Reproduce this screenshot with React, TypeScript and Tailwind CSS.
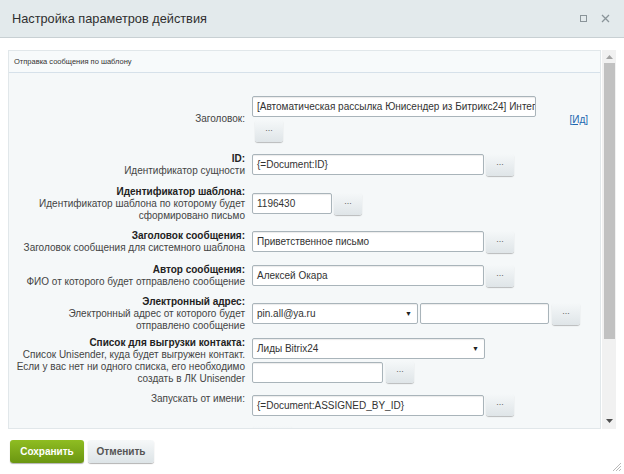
import React from 'react'

const inputCls =
  'h-[21px] rounded-[2px] border border-[#a9b4ba] bg-white px-[4px] text-[10px] leading-[19px] text-[#333] shadow-[inset_0_1px_1px_rgba(0,0,0,0.08)] outline-none'

function DotsButton({ className = '' }: { className?: string }) {
  return (
    <button
      className={
        'flex h-[22px] w-[28px] items-start justify-center rounded-[3px] bg-gradient-to-b from-[#f5f8f9] to-[#dfe5e8] pt-[4px] text-[9px] leading-[9px] text-[#666] shadow-[0_1px_1px_rgba(0,0,0,0.25)] ' +
        className
      }
    >
      ...
    </button>
  )
}

function Select({ value, width }: { value: string; width: string }) {
  return (
    <div className={inputCls + ' flex items-center justify-between pr-[5px] ' + width}>
      <span>{value}</span>
      <span className="text-[7px] text-[#222]">▼</span>
    </div>
  )
}

function Label({ title, lines }: { title?: string; lines: string[] }) {
  return (
    <div className="pr-[7px] text-right text-[10px] leading-[12px] text-[#444]">
      {title && <div className="text-[10px] font-bold leading-[13px] text-[#222]">{title}</div>}
      {lines.map((l) => (
        <div key={l}>{l}</div>
      ))}
    </div>
  )
}

export default function App() {
  return (
    <div
      className="relative h-[474px] w-[624px] overflow-hidden bg-white"
      style={{ fontFamily: '"Liberation Sans", Arial, sans-serif' }}
    >
      {/* Title bar */}
      <div className="flex h-[38px] items-center justify-between border-b border-[#c8d0d3] bg-[#e3eaec] pl-[12px] pr-[14px]">
        <span className="text-[12.75px] text-[#2f2f2f]">Настройка параметров действия</span>
        <div className="flex items-center gap-[14px] text-[#8a9499]">
          <span className="h-[7px] w-[7px] border border-[#8a9499]" />
          <svg width="9" height="9" viewBox="0 0 9 9">
            <path d="M1 1l7 7M8 1L1 8" stroke="currentColor" strokeWidth="1.3" />
          </svg>
        </div>
      </div>

      {/* Panel */}
      <div className="ml-[8px] mt-[12px] flex h-[379px] w-[609px]">
        <div className="flex w-[593px] flex-col overflow-hidden border border-[#e1e7ea] bg-[#f5f8f9]">
          <div className="flex h-[22px] shrink-0 items-center border-b border-[#d6e1ea] bg-[#f7fafb] pl-[5px] text-[7.5px] text-[#333]">
            Отправка сообщения по шаблону
          </div>

          <div className="flex flex-col">
            {/* Заголовок */}
            <div className="mt-[23px] grid grid-cols-[243px_1fr] items-center">
              <Label lines={['Заголовок:']} />
              <div className="flex items-center">
                <div className="flex flex-col">
                  <div className={inputCls + ' h-[20px] w-[284px] overflow-hidden whitespace-nowrap'}>
                    [Автоматическая рассылка Юнисендер из Битрикс24] Интеграция
                  </div>
                  <DotsButton className="ml-[3px] mt-[3px] h-[21px]" />
                </div>
                <span className="ml-auto mr-[12px] text-[10px] text-[#2067b0]">
                  [<span className="underline">Ид</span>]
                </span>
              </div>
            </div>

            {/* ID */}
            <div className="mt-[10px] grid grid-cols-[243px_1fr] items-center">
              <Label title="ID:" lines={['Идентификатор сущности']} />
              <div className="flex items-center gap-[2px]">
                <div className={inputCls + ' w-[232px]'}>{'{=Document:ID}'}</div>
                <DotsButton />
              </div>
            </div>

            {/* Идентификатор шаблона */}
            <div className="mt-[8px] grid grid-cols-[243px_1fr] items-center">
              <Label
                title="Идентификатор шаблона:"
                lines={['Идентификатор шаблона по которому будет', 'сформировано письмо']}
              />
              <div className="flex items-center gap-[2px]">
                <div className={inputCls + ' w-[80px]'}>1196430</div>
                <DotsButton />
              </div>
            </div>

            {/* Заголовок сообщения */}
            <div className="mt-[7px] grid grid-cols-[243px_1fr] items-center">
              <Label title="Заголовок сообщения:" lines={['Заголовок сообщения для системного шаблона']} />
              <div className="flex items-center gap-[2px]">
                <div className={inputCls + ' w-[232px]'}>Приветственное письмо</div>
                <DotsButton />
              </div>
            </div>

            {/* Автор сообщения */}
            <div className="mt-[9px] grid grid-cols-[243px_1fr] items-center">
              <Label title="Автор сообщения:" lines={['ФИО от которого будет отправлено сообщение']} />
              <div className="flex items-center gap-[2px]">
                <div className={inputCls + ' w-[232px]'}>Алексей Окара</div>
                <DotsButton />
              </div>
            </div>

            {/* Электронный адрес */}
            <div className="mt-[7px] grid grid-cols-[243px_1fr] items-center">
              <Label
                title="Электронный адрес:"
                lines={['Электронный адрес от которого будет', 'отправлено сообщение']}
              />
              <div className="flex items-center gap-[2px]">
                <Select value="pin.all@ya.ru" width="w-[166px]" />
                <div className={inputCls + ' w-[129px]'} />
                <DotsButton className="ml-[1px]" />
              </div>
            </div>

            {/* Список для выгрузки */}
            <div className="mt-[4px] grid grid-cols-[243px_1fr] items-center">
              <Label
                title="Список для выгрузки контакта:"
                lines={[
                  'Список Unisender, куда будет выгружен контакт.',
                  'Если у вас нет ни одного списка, его необходимо',
                  'создать в ЛК Unisender',
                ]}
              />
              <div className="flex flex-col gap-[2px]">
                <Select value="Лиды Bitrix24" width="w-[233px] h-[20px]" />
                <div className="flex items-center gap-[3px]">
                  <div className={inputCls + ' w-[131px]'} />
                  <DotsButton />
                </div>
              </div>
            </div>

            {/* Запускать от имени */}
            <div className="mt-[9px] grid grid-cols-[243px_1fr] items-start">
              <div className="mt-[-1px]">
                <Label lines={['Запускать от имени:']} />
              </div>
              <div className="flex flex-col">
                <div className="flex items-center gap-[2px]">
                  <div className={inputCls + ' w-[232px]'}>{'{=Document:ASSIGNED_BY_ID}'}</div>
                  <DotsButton />
                </div>
                <DotsButton className="ml-[1px] mt-[10px] w-[39px]" />
              </div>
            </div>
          </div>
        </div>

        {/* Scrollbar */}
        <div className="ml-[1px] flex w-[14px] flex-col items-center bg-[#f1f1f1]">
          <svg width="7" height="4" viewBox="0 0 7 4" className="mt-[5px]">
            <path d="M3.5 0L7 4H0z" fill="#a3a3a3" />
          </svg>
          <div className="mt-[4px] h-[276px] w-[11px] bg-[#c1c1c1]" />
          <svg width="7" height="4" viewBox="0 0 7 4" className="mt-auto mb-[6px]">
            <path d="M0 0h7L3.5 4z" fill="#505050" />
          </svg>
        </div>
      </div>

      {/* Footer */}
      <div className="ml-[10px] mt-[11px] flex gap-[4px]">
        <button className="h-[23px] w-[74px] rounded-[3px] bg-gradient-to-b from-[#8fbd22] to-[#6b9611] text-[10px] font-bold text-white shadow-[0_1px_1px_rgba(0,0,0,0.3)]">
          Сохранить
        </button>
        <button className="h-[23px] w-[66px] rounded-[3px] bg-gradient-to-b from-[#f6f8f9] to-[#dde4e7] text-[10px] font-bold text-[#555] shadow-[0_1px_1px_rgba(0,0,0,0.3)]">
          Отменить
        </button>
      </div>

      {/* Resize grip */}
      <svg width="10" height="10" viewBox="0 0 10 10" className="absolute bottom-[2px] right-[2px]">
        <path d="M9 1L1 9M9 4L4 9M9 7L7 9" stroke="#b9b9b9" strokeWidth="1" />
      </svg>
    </div>
  )
}
